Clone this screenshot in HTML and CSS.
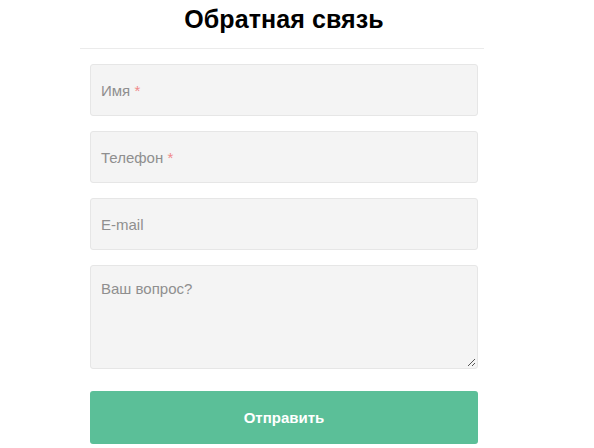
FILE: index.html
```html
<!DOCTYPE html>
<html lang="ru">
<head>
<meta charset="utf-8">
<title>Обратная связь</title>
<link rel="stylesheet" href="styles.css">
</head>
<body>
<div class="wrap">
  <div class="header">
    <h1 class="title">Обратная связь</h1>
  </div>
  <form class="form">
    <div class="field"><span class="ph">Имя <span class="req">*</span></span></div>
    <div class="field"><span class="ph">Телефон <span class="req">*</span></span></div>
    <div class="field"><span class="ph">E-mail</span></div>
    <div class="field area"><span class="ph">Ваш вопрос?</span>
      <svg class="grip" width="8" height="8" viewBox="0 0 8 8"><path d="M1 8L8 1M5 8L8 5" stroke="#555" stroke-width="1"/></svg>
    </div>
    <button type="button" class="btn">Отправить</button>
  </form>
</div>
</body>
</html>
```
FILE: styles.css
```css
html, body {
  margin: 0;
  padding: 0;
  background: #fff;
}
body {
  font-family: "Liberation Sans", Arial, sans-serif;
}
.wrap {
  width: 404px;
  margin-left: 80px;
}
.header {
  border-bottom: 1px solid #ebebeb;
  height: 49px;
  box-sizing: border-box;
}
.title {
  margin: 0;
  padding-top: 4px;
  text-align: center;
  font-size: 25px;
  line-height: 30px;
  font-weight: bold;
  color: #000;
  letter-spacing: 0.1px;
  padding-left: 4px;
}
.form {
  width: 388px;
  margin-left: 10px;
  padding-top: 15px;
  display: flex;
  flex-direction: column;
  gap: 15px;
}
.field {
  position: relative;
  height: 52px;
  box-sizing: border-box;
  background: #f4f4f4;
  border: 1px solid #e6e6e6;
  border-radius: 3px;
  padding: 0 10px;
  display: flex;
  align-items: center;
  font-size: 15px;
  color: #8f8f8f;
}
.field.area {
  height: 104px;
  align-items: flex-start;
  padding-top: 14px;
}
.req {
  color: #f08a8a;
}
.grip {
  position: absolute;
  right: 2px;
  bottom: 2px;
}
.btn {
  margin-top: 7px;
  height: 53px;
  border: none;
  border-radius: 3px;
  background: #5bbf98;
  color: #fff;
  font-family: "Liberation Sans", Arial, sans-serif;
  font-size: 15px;
  font-weight: bold;
  cursor: pointer;
}
```
